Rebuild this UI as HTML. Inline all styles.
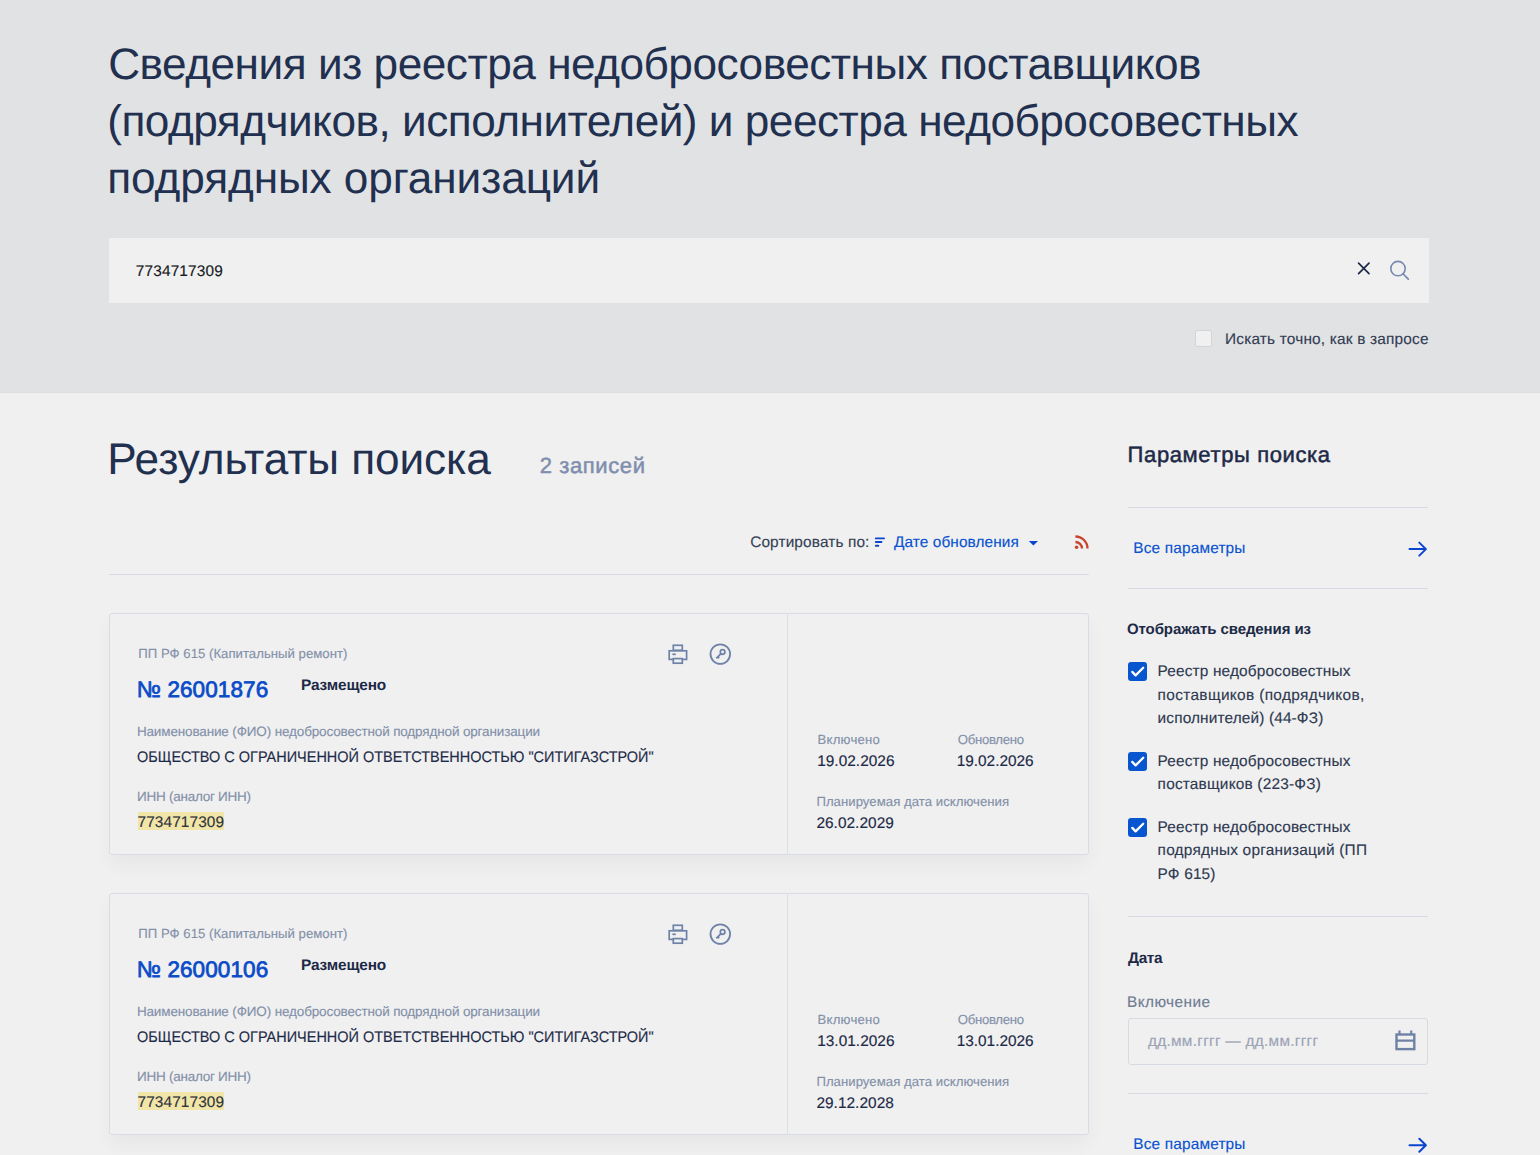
<!DOCTYPE html>
<html lang="ru">
<head>
<meta charset="utf-8">
<title>Реестр недобросовестных поставщиков</title>
<style>
*{box-sizing:border-box;margin:0;padding:0}
html,body{width:1540px;height:1155px;overflow:hidden;background:#f0f0f0;font-family:"Liberation Sans",sans-serif;color:#1d2a47}
.a{position:absolute}
.t{position:absolute;white-space:nowrap;text-rendering:geometricPrecision}
.hdr{position:absolute;left:0;top:0;width:1540px;height:393px;background:#e1e2e4;border-bottom:1px solid #dcdde0}
.search{position:absolute;left:109px;top:238px;width:1320px;height:65px;background:#f0f0f0}
.chk0{position:absolute;left:1195px;top:330px;width:17px;height:17px;border:1px solid #d3d4d8;border-radius:2px;background:#f0f0f0}
.hr{position:absolute;height:1px;background:#d6dae5}
.card{position:absolute;left:109px;width:980px;height:242px;border:1px solid #d8dce7;border-radius:3px;background:#f0f0f0;box-shadow:0 10px 18px rgba(0,0,0,0.04)}
.card .div{position:absolute;left:677px;top:0;width:1px;height:240px;background:#dcdfe5}
.hl{position:absolute;background:#f2e5a8}
.cb{position:absolute;left:1128px;width:19px;height:19px;border-radius:3px;background:#0855d0}
.inp{position:absolute;left:1128px;top:1018px;width:300px;height:47px;border:1px solid #d6dae3;border-radius:3px}
svg{position:absolute;overflow:visible}
</style>
</head>
<body>
<div class="hdr"></div>
<div class="search"></div>
<svg style="left:0;top:0" width="1540" height="1155" viewBox="0 0 1540 1155">
  <!-- clear x -->
  <path d="M1358.6 263.2 L1369 273.6 M1369 263.2 L1358.6 273.6" stroke="#1d2a47" stroke-width="1.7" stroke-linecap="round" fill="none"/>
  <!-- search -->
  <circle cx="1398" cy="268.6" r="7.2" stroke="#7689b0" stroke-width="1.6" fill="none"/>
  <path d="M1403.2 274 L1408.3 279.2" stroke="#7689b0" stroke-width="1.7" stroke-linecap="round"/>
  <!-- sort icon -->
  <path d="M875.8 538.4 H884 M875.8 542.05 H881.5 M875.8 545.7 H878.3" stroke="#0a45d0" stroke-width="1.9" stroke-linecap="round"/>
  <!-- caret -->
  <path d="M1028.8 541 H1038 L1033.4 545.6 Z" fill="#0a45d0"/>
  <!-- rss -->
  <circle cx="1076.6" cy="547.3" r="1.8" fill="#c8462e"/>
  <path d="M1075.4 542 A6.6 6.6 0 0 1 1082 548.6" stroke="#c8462e" stroke-width="2.3" fill="none"/>
  <path d="M1075.4 536.5 A12.1 12.1 0 0 1 1087.5 548.6" stroke="#c8462e" stroke-width="2.3" fill="none"/>
  <!-- arrows -->
  <path d="M1409.5 549.1 H1425.5 M1419.3 542.6 L1425.9 549.1 L1419.3 555.6" stroke="#0a45d0" stroke-width="2" stroke-linecap="round" stroke-linejoin="round" fill="none"/>
  <path d="M1409.5 1145.3 H1425.5 M1419.3 1138.8 L1425.9 1145.3 L1419.3 1151.8" stroke="#0a45d0" stroke-width="2" stroke-linecap="round" stroke-linejoin="round" fill="none"/>
</svg>
<div class="chk0"></div>
<div class="hr" style="left:109px;top:574px;width:980px"></div>

<div class="card" style="top:613px"><div class="div"></div></div>
<div class="card" style="top:893px"><div class="div"></div></div>
<div class="hl" style="left:138px;top:812px;width:86px;height:18px"></div>
<div class="hl" style="left:138px;top:1092px;width:86px;height:18px"></div>

<svg style="left:0;top:0" width="1540" height="1155" viewBox="0 0 1540 1155">
  <defs>
    <g id="prn" stroke="#6e82a8" stroke-width="1.7" fill="none">
      <rect x="673.3" y="645.3" width="9" height="5"/>
      <rect x="669.2" y="650.8" width="17.4" height="8.6"/>
      <rect x="673.3" y="658.6" width="9" height="4.6" fill="#f0f0f0"/>
      <path d="M672.4 654.3 H675.8"/>
    </g>
    <g id="key" stroke="#6e82a8" fill="none">
      <circle cx="720.3" cy="654.1" r="9.8" stroke-width="1.8"/>
      <circle cx="722.6" cy="652" r="2.3" stroke-width="1.7"/>
      <path d="M721 653.6 L716.3 658.3 M717.6 656.6 L719.2 658.2" stroke-width="1.8"/>
    </g>
  </defs>
  <use href="#prn"/><use href="#key"/>
  <use href="#prn" y="280"/><use href="#key" y="280"/>
</svg>

<div class="hr" style="left:1128px;top:507px;width:300px"></div>
<div class="hr" style="left:1128px;top:588px;width:300px"></div>
<div class="hr" style="left:1128px;top:916px;width:300px"></div>
<div class="hr" style="left:1128px;top:1093px;width:300px"></div>

<div class="cb" style="top:662px"></div>
<div class="cb" style="top:752px"></div>
<div class="cb" style="top:818px"></div>
<svg style="left:0;top:0" width="1540" height="1155" viewBox="0 0 1540 1155">
  <g stroke="#ffffff" stroke-width="2.3" fill="none" stroke-linecap="round" stroke-linejoin="round">
    <path d="M1132.3 671.9 L1135.6 675.4 L1143.2 667.8"/>
    <path d="M1132.3 761.9 L1135.6 765.4 L1143.2 757.8"/>
    <path d="M1132.3 827.9 L1135.6 831.4 L1143.2 823.8"/>
  </g>
</svg>
<div class="inp"></div>
<svg style="left:0;top:0" width="1540" height="1155" viewBox="0 0 1540 1155">
  <rect x="1396.5" y="1034.5" width="17.8" height="14.6" stroke="#6f82a6" stroke-width="2.4" fill="none"/>
  <path d="M1396.5 1040.6 H1414.3 M1399.5 1030.4 V1034 M1411.2 1030.4 V1034" stroke="#6f82a6" stroke-width="2.2" fill="none"/>
</svg>
<div class="t" style="left:108.2px;top:34.0px;line-height:62px;color:#223050;font-size:44.2px;font-weight:normal;letter-spacing:-0.494px;">Сведения из реестра недобросовестных поставщиков</div>
<div class="t" style="left:107.2px;top:90.5px;line-height:62px;color:#223050;font-size:44.2px;font-weight:normal;letter-spacing:-0.513px;">(подрядчиков, исполнителей) и реестра недобросовестных</div>
<div class="t" style="left:107.2px;top:147.5px;line-height:62px;color:#223050;font-size:44.2px;font-weight:normal;letter-spacing:-0.110px;">подрядных организаций</div>
<div class="t" style="left:135.8px;top:261.0px;line-height:22px;color:#161a22;font-size:15.4px;font-weight:normal;letter-spacing:0.156px;-webkit-text-stroke:0.15px currentColor;">7734717309</div>
<div class="t" style="left:1225.0px;top:328.6px;line-height:22px;color:#323d53;font-size:15.4px;font-weight:normal;letter-spacing:0.192px;-webkit-text-stroke:0.15px currentColor;">Искать точно, как в запросе</div>
<div class="t" style="left:107.2px;top:428.5px;line-height:62px;color:#223050;font-size:44.2px;font-weight:normal;letter-spacing:-0.094px;">Результаты поиска</div>
<div class="t" style="left:539.7px;top:450.3px;line-height:31px;color:#7f8eae;font-size:22px;font-weight:normal;letter-spacing:0.612px;-webkit-text-stroke:0.5px currentColor;">2 записей</div>
<div class="t" style="left:750.2px;top:531.8px;line-height:22px;color:#343f55;font-size:15.4px;font-weight:normal;letter-spacing:0.129px;-webkit-text-stroke:0.15px currentColor;">Сортировать по:</div>
<div class="t" style="left:894.0px;top:531.8px;line-height:22px;color:#0a52d0;font-size:15.4px;font-weight:normal;letter-spacing:0.086px;-webkit-text-stroke:0.15px currentColor;">Дате обновления</div>
<div class="t" style="left:138.3px;top:643.6px;line-height:19px;color:#8490aa;font-size:13.2px;font-weight:normal;letter-spacing:0.007px;-webkit-text-stroke:0.15px currentColor;">ПП РФ 615 (Капитальный ремонт)</div>
<div class="t" style="left:136.8px;top:673.6px;line-height:32px;color:#0a4bc9;font-size:22.5px;font-weight:normal;letter-spacing:0.100px;-webkit-text-stroke:0.5px currentColor;-webkit-text-stroke:0.75px currentColor;">№ 26001876</div>
<div class="t" style="left:301.0px;top:674.6px;line-height:22px;color:#1d2a47;font-size:15.4px;font-weight:bold;letter-spacing:-0.125px;">Размещено</div>
<div class="t" style="left:136.9px;top:722.0px;line-height:19px;color:#8490aa;font-size:13.5px;font-weight:normal;letter-spacing:-0.145px;-webkit-text-stroke:0.15px currentColor;">Наименование (ФИО) недобросовестной подрядной организации</div>
<div class="t" style="left:137.0px;top:746.5px;line-height:22px;color:#1d2a47;font-size:15.4px;font-weight:normal;letter-spacing:0.000px;-webkit-text-stroke:0.15px currentColor;transform:scaleX(0.9405);transform-origin:1px 0;">ОБЩЕСТВО С ОГРАНИЧЕННОЙ ОТВЕТСТВЕННОСТЬЮ "СИТИГАЗСТРОЙ"</div>
<div class="t" style="left:137.0px;top:787.0px;line-height:19px;color:#8490aa;font-size:13.5px;font-weight:normal;letter-spacing:-0.253px;-webkit-text-stroke:0.15px currentColor;">ИНН (аналог ИНН)</div>
<div class="t" style="left:137.5px;top:812.2px;line-height:22px;color:#2f3440;font-size:15.4px;font-weight:normal;letter-spacing:0.111px;-webkit-text-stroke:0.15px currentColor;">7734717309</div>
<div class="t" style="left:817.6px;top:729.8px;line-height:19px;color:#8490aa;font-size:13.2px;font-weight:normal;letter-spacing:0.200px;-webkit-text-stroke:0.15px currentColor;">Включено</div>
<div class="t" style="left:957.7px;top:729.8px;line-height:19px;color:#8490aa;font-size:13.2px;font-weight:normal;letter-spacing:-0.300px;-webkit-text-stroke:0.15px currentColor;">Обновлено</div>
<div class="t" style="left:817.2px;top:751.4px;line-height:22px;color:#1d2a47;font-size:15.4px;font-weight:normal;letter-spacing:0.033px;-webkit-text-stroke:0.15px currentColor;">19.02.2026</div>
<div class="t" style="left:956.7px;top:751.4px;line-height:22px;color:#1d2a47;font-size:15.4px;font-weight:normal;letter-spacing:-0.011px;-webkit-text-stroke:0.15px currentColor;">19.02.2026</div>
<div class="t" style="left:816.4px;top:791.7px;line-height:19px;color:#8490aa;font-size:13.2px;font-weight:normal;letter-spacing:0.023px;-webkit-text-stroke:0.15px currentColor;">Планируемая дата исключения</div>
<div class="t" style="left:816.4px;top:813.0px;line-height:22px;color:#1d2a47;font-size:15.4px;font-weight:normal;letter-spacing:0.044px;-webkit-text-stroke:0.15px currentColor;">26.02.2029</div>
<div class="t" style="left:138.3px;top:923.6px;line-height:19px;color:#8490aa;font-size:13.2px;font-weight:normal;letter-spacing:0.007px;-webkit-text-stroke:0.15px currentColor;">ПП РФ 615 (Капитальный ремонт)</div>
<div class="t" style="left:136.8px;top:953.6px;line-height:32px;color:#0a4bc9;font-size:22.5px;font-weight:normal;letter-spacing:0.100px;-webkit-text-stroke:0.5px currentColor;-webkit-text-stroke:0.75px currentColor;">№ 26000106</div>
<div class="t" style="left:301.0px;top:954.6px;line-height:22px;color:#1d2a47;font-size:15.4px;font-weight:bold;letter-spacing:-0.125px;">Размещено</div>
<div class="t" style="left:136.9px;top:1002.0px;line-height:19px;color:#8490aa;font-size:13.5px;font-weight:normal;letter-spacing:-0.145px;-webkit-text-stroke:0.15px currentColor;">Наименование (ФИО) недобросовестной подрядной организации</div>
<div class="t" style="left:137.0px;top:1026.5px;line-height:22px;color:#1d2a47;font-size:15.4px;font-weight:normal;letter-spacing:0.000px;-webkit-text-stroke:0.15px currentColor;transform:scaleX(0.9405);transform-origin:1px 0;">ОБЩЕСТВО С ОГРАНИЧЕННОЙ ОТВЕТСТВЕННОСТЬЮ "СИТИГАЗСТРОЙ"</div>
<div class="t" style="left:137.0px;top:1067.0px;line-height:19px;color:#8490aa;font-size:13.5px;font-weight:normal;letter-spacing:-0.253px;-webkit-text-stroke:0.15px currentColor;">ИНН (аналог ИНН)</div>
<div class="t" style="left:137.5px;top:1092.2px;line-height:22px;color:#2f3440;font-size:15.4px;font-weight:normal;letter-spacing:0.111px;-webkit-text-stroke:0.15px currentColor;">7734717309</div>
<div class="t" style="left:817.6px;top:1009.8px;line-height:19px;color:#8490aa;font-size:13.2px;font-weight:normal;letter-spacing:0.200px;-webkit-text-stroke:0.15px currentColor;">Включено</div>
<div class="t" style="left:957.7px;top:1009.8px;line-height:19px;color:#8490aa;font-size:13.2px;font-weight:normal;letter-spacing:-0.300px;-webkit-text-stroke:0.15px currentColor;">Обновлено</div>
<div class="t" style="left:817.2px;top:1031.4px;line-height:22px;color:#1d2a47;font-size:15.4px;font-weight:normal;letter-spacing:0.033px;-webkit-text-stroke:0.15px currentColor;">13.01.2026</div>
<div class="t" style="left:956.7px;top:1031.4px;line-height:22px;color:#1d2a47;font-size:15.4px;font-weight:normal;letter-spacing:-0.011px;-webkit-text-stroke:0.15px currentColor;">13.01.2026</div>
<div class="t" style="left:816.4px;top:1071.7px;line-height:19px;color:#8490aa;font-size:13.2px;font-weight:normal;letter-spacing:0.023px;-webkit-text-stroke:0.15px currentColor;">Планируемая дата исключения</div>
<div class="t" style="left:816.4px;top:1093.0px;line-height:22px;color:#1d2a47;font-size:15.4px;font-weight:normal;letter-spacing:0.044px;-webkit-text-stroke:0.15px currentColor;">29.12.2028</div>
<div class="t" style="left:1127.6px;top:439.0px;line-height:31px;color:#1d2a47;font-size:22px;font-weight:normal;letter-spacing:0.620px;-webkit-text-stroke:0.5px currentColor;">Параметры поиска</div>
<div class="t" style="left:1133.3px;top:538.4px;line-height:22px;color:#0a52d0;font-size:15.4px;font-weight:normal;letter-spacing:0.167px;-webkit-text-stroke:0.15px currentColor;">Все параметры</div>
<div class="t" style="left:1127.0px;top:619.2px;line-height:21px;color:#1d2a47;font-size:15px;font-weight:bold;letter-spacing:-0.100px;">Отображать сведения из</div>
<div class="t" style="left:1157.6px;top:661.4px;line-height:22px;color:#2e3950;font-size:15.4px;font-weight:normal;letter-spacing:0.150px;-webkit-text-stroke:0.15px currentColor;">Реестр недобросовестных</div>
<div class="t" style="left:1157.6px;top:684.8px;line-height:22px;color:#2e3950;font-size:15.4px;font-weight:normal;letter-spacing:0.350px;-webkit-text-stroke:0.15px currentColor;">поставщиков (подрядчиков,</div>
<div class="t" style="left:1157.6px;top:708.2px;line-height:22px;color:#2e3950;font-size:15.4px;font-weight:normal;letter-spacing:0.140px;-webkit-text-stroke:0.15px currentColor;">исполнителей) (44-ФЗ)</div>
<div class="t" style="left:1157.6px;top:750.9px;line-height:22px;color:#2e3950;font-size:15.4px;font-weight:normal;letter-spacing:0.150px;-webkit-text-stroke:0.15px currentColor;">Реестр недобросовестных</div>
<div class="t" style="left:1157.6px;top:774.3px;line-height:22px;color:#2e3950;font-size:15.4px;font-weight:normal;letter-spacing:0.200px;-webkit-text-stroke:0.15px currentColor;">поставщиков (223-ФЗ)</div>
<div class="t" style="left:1157.6px;top:817.0px;line-height:22px;color:#2e3950;font-size:15.4px;font-weight:normal;letter-spacing:0.150px;-webkit-text-stroke:0.15px currentColor;">Реестр недобросовестных</div>
<div class="t" style="left:1157.6px;top:840.4px;line-height:22px;color:#2e3950;font-size:15.4px;font-weight:normal;letter-spacing:0.225px;-webkit-text-stroke:0.15px currentColor;">подрядных организаций (ПП</div>
<div class="t" style="left:1157.6px;top:863.8px;line-height:22px;color:#2e3950;font-size:15.4px;font-weight:normal;letter-spacing:0.167px;-webkit-text-stroke:0.15px currentColor;">РФ 615)</div>
<div class="t" style="left:1128.0px;top:948.2px;line-height:22px;color:#1d2a47;font-size:15.4px;font-weight:bold;letter-spacing:-0.333px;">Дата</div>
<div class="t" style="left:1127.0px;top:991.5px;line-height:22px;color:#6f7b93;font-size:15.4px;font-weight:normal;letter-spacing:0.438px;-webkit-text-stroke:0.15px currentColor;">Включение</div>
<div class="t" style="left:1148.0px;top:1031.0px;line-height:22px;color:#9ca4b6;font-size:15.4px;font-weight:normal;letter-spacing:0.264px;-webkit-text-stroke:0.15px currentColor;">дд.мм.гггг — дд.мм.гггг</div>
<div class="t" style="left:1133.3px;top:1134.0px;line-height:22px;color:#0a52d0;font-size:15.4px;font-weight:normal;letter-spacing:0.167px;-webkit-text-stroke:0.15px currentColor;">Все параметры</div>
</body>
</html>
